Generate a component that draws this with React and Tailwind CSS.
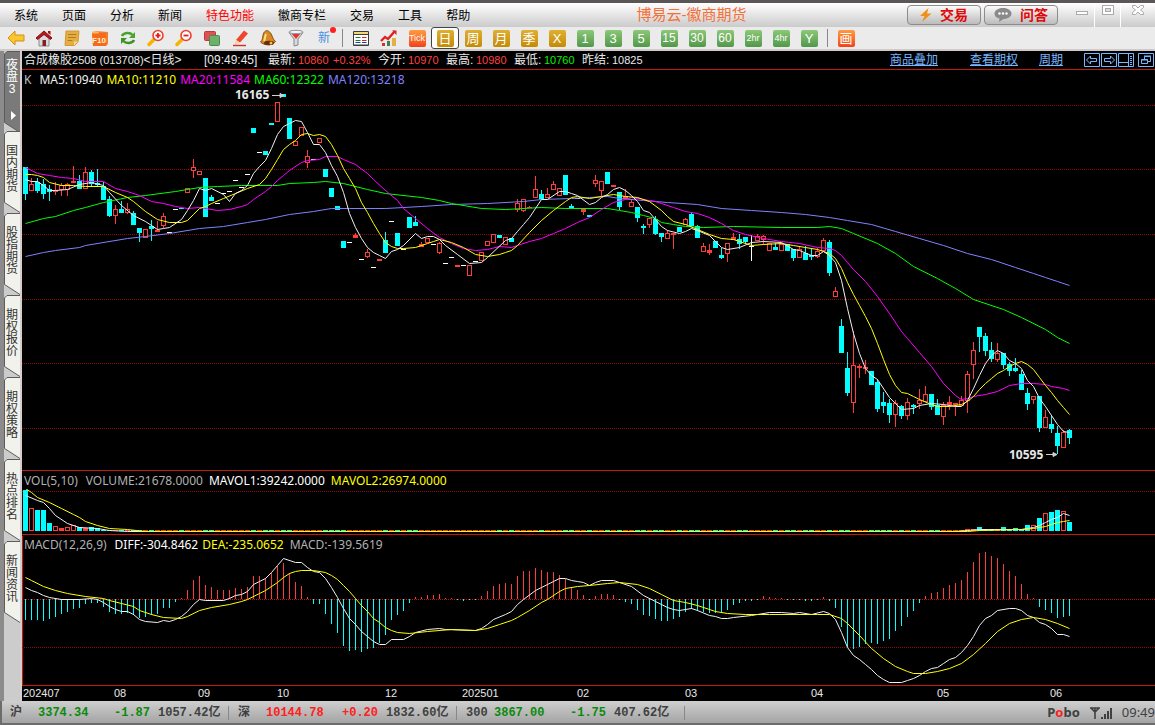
import { clsx } from 'clsx';

// one slot per trading day, everything is drawn in chart pixels
const STEP = 6;
const LEFT = 3;
const ZERO = 599;
const VOL_BASE = 531;

const RED = '#ff3c3c';
const CYAN = '#00ffff';
const WHITE = '#f0f0f0';
const YELLOW = '#ffff00';

// kind high top bottom low  (d = down, u = up, f = flat)
const CANDLES = `d 167 167 194 200,u 178 184 191 191,d 178 182 191 193,d 179 184 194 199,d 185 189 192 201,
u 182 190 192 195,u 183 185 190 196,u 183 184 190 196,u 166 181 183 183,d 175 181 189 189,
u 167 172 189 189,d 170 172 184 187,d 169 183 185 187,d 182 186 200 200,d 196 199 216 217,
u 205 209 216 224,d 201 209 213 213,u 203 209 213 214,d 211 213 225 225,d 228 228 233 242,
u 229 229 238 238,d 220 226 229 241,u 221 230 232 232,u 213 216 226 228,f 232 232 233 233,
f 209 209 210 210,d 208 208 209 209,u 188 188 193 193,u 159 167 171 178,u 171 171 175 175,
d 178 178 217 217,d 195 197 201 201,f 203 203 204 204,f 193 193 194 194,f 191 191 192 192,
f 180 180 181 181,f 187 187 188 188,f 174 174 175 175,d 128 128 133 133,f 152 152 153 153,
d 151 151 155 155,d 123 123 125 125,u 102 102 122 122,d 94 94 97 97,d 118 118 139 139,
u 141 141 146 146,u 127 127 136 136,u 150 156 163 168,f 159 159 160 160,u 138 138 143 143,
d 169 169 177 177,d 188 188 197 197,d 206 206 210 210,d 241 241 248 248,f 242 242 243 243,
u 233 235 238 238,f 259 259 260 260,u 249 252 257 258,f 267 267 268 268,u 259 259 261 261,
d 232 240 253 253,f 221 221 222 222,d 233 233 246 246,f 249 249 250 250,d 217 217 228 228,
d 216 222 226 226,u 242 244 247 247,u 238 238 243 243,f 244 244 245 245,u 242 243 253 254,
f 263 263 264 264,f 257 257 258 258,u 265 265 267 267,f 265 265 266 266,u 265 265 276 276,
f 261 261 262 262,u 252 252 261 261,u 241 241 246 246,u 234 234 243 243,d 235 235 238 238,
u 237 237 245 245,d 238 238 242 242,u 199 203 210 212,u 199 199 211 212,u 206 207 208 208,
u 176 189 198 198,d 190 194 199 199,u 188 194 198 198,u 181 184 190 190,u 188 188 196 196,
d 175 175 195 195,d 204 206 208 208,f 198 198 199 199,u 209 209 212 215,d 215 215 217 217,
u 175 180 184 187,u 181 181 191 196,d 172 172 184 184,u 185 185 187 187,d 192 192 207 210,
u 189 196 199 199,u 199 202 207 207,d 207 207 218 222,d 224 226 228 234,u 218 218 225 228,
d 216 219 234 235,d 233 233 237 242,u 230 233 239 239,u 233 233 235 249,d 227 227 232 232,
u 218 219 225 225,d 213 214 226 226,d 225 226 238 238,u 243 246 252 252,u 244 250 253 255,
d 241 241 248 248,d 248 255 258 259,u 243 243 254 262,u 233 237 240 240,d 234 239 244 249,
d 237 237 242 243,f 235 246 247 261,u 234 236 241 241,u 235 236 240 245,u 243 243 251 251,
d 243 247 250 250,u 243 244 251 251,d 244 244 251 251,d 249 249 258 261,u 246 249 258 258,
d 246 253 260 260,d 249 255 257 260,u 248 251 257 258,u 238 240 251 251,d 240 242 273 276,
u 287 291 297 297,d 319 326 353 353,d 352 368 393 396,u 331 365 403 413,u 364 366 368 378,
u 360 367 369 374,d 371 371 385 385,d 379 382 409 412,d 392 402 406 413,d 399 403 415 423,
u 400 403 415 427,d 405 406 416 419,u 398 402 416 420,d 404 405 407 414,u 389 400 404 409,
u 386 394 402 402,d 394 394 407 410,d 399 405 415 415,u 402 405 417 425,u 396 402 405 410,
u 403 403 405 416,u 396 400 406 406,u 371 374 401 413,u 342 350 365 379,d 327 327 337 352,
d 333 336 351 356,d 342 350 359 362,u 343 353 360 362,d 353 353 365 369,d 362 364 371 376,
d 358 368 371 372,d 370 374 390 390,d 388 393 404 410,u 396 396 400 404,d 396 396 428 432,
u 410 417 428 428,d 415 424 429 433,d 426 433 446 454,u 430 432 448 448,d 429 430 438 444`
  .split(',')
  .map((row) => {
    const [kind, ...nums] = row.trim().split(' ');
    const [high, top, bottom, low] = nums.map(Number);
    return { kind, high, top, bottom, low };
  });

// "slot,y" pairs
const MA_LINES = [
  {
    color: '#8080ff',
    data: '0,256 3,252 5,250 9,247 10,245 17,238 20,236 24,233 29,228 33,226 37,222 40,219 44,214 48,211 51,208 54,208 60,208 66,206 71,204 77,203 83,201 86,199 91,198 94,197 97,196 99,198 103,200 107,202 112,204 116,208 121,210 126,212 130,214 134,217 137,220 141,224 145,231 149,238 153,245 157,253 161,259 165,267 168,273 170,277 172,281 174,285',
  },
  {
    color: '#00ff00',
    data: '0,223 3,218 5,216 8,210 10,207 13,202 17,197 20,195 25,191 29,187 32,186 36,185 42,185 44,183 48,182 50,181 53,183 57,189 60,193 66,197 69,200 71,203 76,208 80,209 86,207 90,208 97,208 99,210 101,212 103,215 105,218 106,222 108,224 110,226 113,227 118,226 126,227 132,227 134,226 136,228 138,233 142,243 145,253 148,266 152,278 155,288 158,299 163,309 166,317 170,329 172,337 174,343',
  },
  {
    color: '#ff00ff',
    data: '0,167 2,173 4,175 6,177 8,178 10,181 13,181 15,188 17,191 19,195 21,201 23,203 25,206 27,208 29,207 32,210 34,209 36,206 37,204 38,199 40,191 41,186 42,180 43,175 44,170 46,162 47,160 49,159 50,156 52,156 53,159 55,164 57,173 58,179 60,190 62,200 63,208 65,218 67,228 69,237 71,243 73,248 75,250 77,249 79,246 81,247 82,245 84,241 86,238 88,233 90,228 92,222 94,217 96,209 98,202 100,199 101,197 103,199 105,201 106,203 108,207 110,211 112,213 114,217 116,223 118,230 120,234 123,238 126,241 129,243 132,247 134,248 135,250 136,255 137,262 138,269 140,281 142,296 144,313 146,331 147,338 149,352 151,366 153,383 155,395 156,399 157,398 158,396 160,394 162,391 164,385 166,383 168,383 170,384 171,386 173,388 174,390',
  },
  {
    color: YELLOW,
    data: '0,174 1,174 2,175 3,177 4,182 6,185 8,185 10,186 13,186 15,192 17,197 18,201 20,211 22,219 24,222 26,222 27,220 28,214 29,208 30,206 31,203 33,198 35,193 37,188 39,184 40,178 41,169 42,159 43,149 44,144 45,140 46,134 47,133 48,135 49,134 50,136 51,144 52,155 53,168 54,178 55,188 56,202 57,212 58,223 59,233 60,242 61,246 62,248 63,248 65,247 67,243 68,241 69,239 71,242 73,247 75,254 77,256 79,254 80,252 81,250 82,245 84,232 86,220 88,210 90,201 91,197 92,196 94,198 96,196 98,194 100,196 102,197 104,201 106,210 107,216 108,221 110,224 112,229 114,234 116,238 118,239 121,245 123,244 126,243 128,245 130,247 132,249 134,253 135,258 136,268 137,282 138,294 139,305 140,316 141,328 142,343 143,359 144,374 145,385 146,392 147,393 148,396 149,399 151,404 152,406 154,406 156,404 157,401 158,396 159,389 160,383 161,378 162,373 163,370 164,366 165,363 166,361 167,364 168,369 169,377 170,385 171,392 172,400 173,407 174,414',
  },
  {
    color: WHITE,
    data: '0,179 1,181 2,181 3,185 4,190 5,190 7,189 9,184 11,182 13,185 14,192 16,205 18,215 20,221 22,229 23,228 24,227 26,219 27,210 28,200 29,188 30,190 31,188 33,194 34,201 35,193 36,190 37,185 38,173 39,166 40,160 41,148 42,134 43,126 44,123 45,120 46,121 47,132 48,144 49,144 50,152 51,165 52,176 53,192 54,213 55,227 56,238 57,247 58,252 59,255 60,258 61,251 62,249 63,245 65,233 66,238 67,236 68,236 69,239 70,245 72,254 74,263 76,262 77,257 80,240 81,238 82,231 83,224 84,217 85,208 86,199 87,199 89,191 90,191 91,193 92,195 94,204 95,202 96,197 97,194 98,189 99,187 100,190 101,195 102,201 103,210 104,212 105,219 106,226 107,230 109,233 110,231 111,228 112,230 114,235 116,247 117,249 119,247 121,242 123,241 126,242 128,249 129,250 131,255 132,255 133,251 134,255 135,262 136,280 137,308 138,333 139,353 140,368 141,375 142,379 144,397 145,403 146,409 148,408 149,405 151,403 153,404 155,406 156,406 157,400 158,388 159,375 160,363 161,355 162,350 163,353 164,360 165,363 166,368 167,380 168,386 169,398 170,406 171,415 172,424 173,431 174,432',
  },
];

const VOL_TOPS = {
  0: 490, 1: 508, 2: 510, 3: 510, 4: 523, 5: 526, 6: 528, 7: 527, 8: 525, 9: 527, 10: 528, 11: 527, 12: 528,
  157: 529, 158: 529, 159: 527, 160: 529, 161: 529, 162: 529, 163: 527, 164: 529, 165: 528, 166: 529, 167: 525,
  168: 525, 169: 518, 170: 513, 171: 512, 172: 510, 173: 511, 174: 522,
};

const VOL_LINES = [
  {
    color: WHITE,
    data: '0,495 2,500 3,502 4,508 5,515 7,523 9,527 12,528 14,530 17,531 155,531 157,530 159,529 166,529 167,528 168,527 169,525 170,522 171,519 172,517 173,513 174,515',
  },
  {
    color: YELLOW,
    data: '0,488 1,492 2,497 4,502 6,508 8,514 9,517 10,521 12,525 14,528 17,529 20,531 157,531 159,530 166,529 168,528 170,526 171,524 172,522 173,521 174,520',
  },
];

const MACD_BARS = [
  620, 620, 620, 621, 619, 617, 614, 612, 609, 608, 604, 603, 603, 607, 612, 614, 614, 613, 615, 618, 617, 615, 614,
  608, 608, 602, 598, 590, 580, 576, 585, 587, 590, 590, 590, 588, 589, 587, 576, 576, 578, 573, 566, 563, 573, 582,
  586, 597, 604, 604, 614, 624, 633, 646, 651, 650, 652, 649, 648, 643, 635, 620, 615, 611, 603, 597, 597, 595, 595,
  594, 598, 598, 600, 601, 600, 600, 596, 591, 586, 584, 583, 584, 576, 571, 571, 568, 570, 572, 572, 575, 579, 588,
  590, 595, 600, 596, 594, 594, 595, 600, 602, 604, 610, 615, 616, 619, 621, 621, 619, 617, 612, 609, 611, 612, 613,
  613, 613, 610, 605, 603, 601, 601, 600, 596, 597, 598, 598, 600, 600, 600, 601, 601, 600, 597, 601, 608, 627, 647,
  649, 647, 644, 643, 644, 641, 639, 631, 626, 617, 611, 603, 596, 593, 592, 588, 585, 583, 580, 572, 562, 553, 552,
  556, 558, 564, 571, 576, 584, 594, 598, 607, 610, 613, 618, 617, 616,
];

const MACD_LINES = [
  {
    color: WHITE,
    data: '0,587 1,590 2,592 3,595 4,597 6,599 9,599 11,598 12,599 13,602 14,606 15,609 16,611 17,611 18,614 19,619 20,621 22,622 23,620 24,621 25,619 26,616 27,611 28,604 29,599 30,600 33,600 34,598 35,595 36,594 37,591 38,584 39,581 40,578 41,572 42,565 43,558 45,562 46,562 47,567 48,571 49,572 50,578 51,587 52,597 53,608 54,618 55,624 56,631 57,636 58,641 59,644 60,644 61,639 63,639 64,636 65,632 67,629 69,628 70,629 75,630 76,628 77,624 78,619 80,614 81,611 82,604 83,599 85,590 86,587 87,584 88,581 89,578 90,578 91,580 92,581 93,582 94,585 95,582 96,580 98,580 99,582 101,586 103,595 105,601 106,604 107,607 108,609 109,610 111,608 112,610 114,615 115,616 116,618 117,618 118,617 121,615 122,614 124,612 126,612 128,613 129,612 131,614 133,611 134,613 135,619 136,632 137,647 138,655 139,659 140,664 141,669 142,675 143,679 144,682 146,682 147,680 148,678 149,675 150,671 151,668 152,667 153,663 154,659 155,657 156,652 157,645 158,636 159,625 160,618 161,615 162,610 164,608 165,608 166,610 167,615 168,617 169,622 170,624 171,628 172,634 173,634 174,636',
  },
  {
    color: YELLOW,
    data: '0,577 1,580 3,586 5,590 7,593 10,596 13,598 14,600 16,603 18,606 19,610 21,614 23,617 26,618 27,616 29,610 31,607 34,604 36,601 37,599 39,593 40,590 41,586 42,582 43,577 44,573 45,571 46,570 48,570 50,572 51,575 52,579 53,585 54,591 55,598 56,605 57,611 58,618 59,622 60,627 61,630 62,632 64,633 67,631 71,629 75,630 77,628 79,624 81,620 82,617 84,610 86,602 87,599 89,591 90,588 92,586 94,585 97,583 99,582 102,584 104,588 106,594 108,600 110,602 112,605 115,611 117,613 120,614 124,614 132,614 134,614 136,618 137,623 139,635 141,648 143,658 145,666 147,671 148,673 150,673 152,671 154,668 156,663 158,654 160,643 162,631 164,623 166,619 168,617 170,619 172,623 174,628',
  },
];

const MONTHS = [
  ['202407', 1], ['08', 92], ['09', 176], ['10', 255], ['12', 363], ['202501', 440],
  ['02', 555], ['03', 663], ['04', 789], ['05', 915], ['06', 1028],
];

const MENU = ['系统', '页面', '分析', '新闻', '特色功能', '徽商专栏', '交易', '工具', '帮助'];
const PERIODS = ['日', '周', '月', '季', 'X'];
const MINUTES = ['1', '3', '5', '15', '30', '60', '2hr', '4hr', 'Y'];
const TABS = ['国内期货', '股指期货', '期权报价', '期权策略', '热点排名', '新闻资讯'];

const QUOTES = [
  { label: '今开', value: '10970', tone: 'text-[#ff4040]' },
  { label: '最高', value: '10980', tone: 'text-[#ff4040]' },
  { label: '最低', value: '10760', tone: 'text-[#00f000]' },
  { label: '昨结', value: '10825', tone: 'text-[#e8e8e8]' },
];

const INDICES = [
  { name: '沪', value: '3374.34', diff: '-1.87', amount: '1057.42亿', tone: 'text-[#0a8a0a]' },
  { name: '深', value: '10144.78', diff: '+0.20', amount: '1832.60亿', tone: 'text-[#ff2020]' },
  { name: '300', value: '3867.00', diff: '-1.75', amount: '407.62亿', tone: 'text-[#0a8a0a]' },
];

const toPoints = (data) =>
  data
    .split(' ')
    .map((pair) => {
      const [slot, y] = pair.split(',').map(Number);
      return `${slot * STEP + LEFT + 0.5},${y + 0.5}`;
    })
    .join(' ');

function Lines({ lines }) {
  return lines.map((line, i) => (
    <polyline key={i} points={toPoints(line.data)} fill="none" stroke={line.color} strokeWidth="1" />
  ));
}

function GridLine({ y, color = '#8c0c0c' }) {
  return <line x1="0" x2="100%" y1={y + 0.5} y2={y + 0.5} stroke={color} strokeDasharray="1 1" shapeRendering="crispEdges" />;
}

function Bar({ kind, x, top, bottom }) {
  const height = Math.max(bottom - top, 1);
  if (kind === 'u' && height > 3) {
    return <rect x={x - 1.5} y={top + 0.5} width="4" height={height - 1} fill="#000" stroke={RED} />;
  }
  const fill = kind === 'u' ? RED : kind === 'd' ? CYAN : '#ffffff';
  return <rect x={x - 2} y={top} width="5" height={height} fill={fill} />;
}

function PriceChart() {
  return (
    <svg className="block w-full flex-1 min-h-0 overflow-visible" role="img" aria-label="K线图">
      <g transform="translate(0 -90)">
        {[105, 169, 234, 299, 363, 428].map((y) => (
          <GridLine key={y} y={y} />
        ))}
        <g shapeRendering="crispEdges">
          {CANDLES.map((c, i) => {
            const x = i * STEP + LEFT;
            const color = c.kind === 'u' ? RED : c.kind === 'd' ? CYAN : '#ffffff';
            return (
              <g key={i}>
                <rect x={x} y={c.high} width="1" height={c.low - c.high} fill={color} />
                <Bar kind={c.kind} x={x} top={c.top} bottom={c.bottom} />
              </g>
            );
          })}
        </g>
        <Lines lines={MA_LINES} />
        <g className="font-['Noto_Sans','Open_Sans',sans-serif] text-[12px] font-bold" fill="#e8e8e8">
          <text x="213" y="99">16165</text>
          <text x="987" y="459">10595</text>
        </g>
        <g stroke="#d0d0d0" fill="#d0d0d0">
          <path d="M250 95.500h10M258 93.500l4 2-4 2z" />
          <path d="M1024 454.500h8M1031 452.500l4 2-4 2z" />
        </g>
      </g>
    </svg>
  );
}

function VolumeChart() {
  return (
    <svg className="block h-[45px] w-full" role="img" aria-label="成交量">
      <g transform="translate(0 -489)">
        <GridLine y={491} />
        <g shapeRendering="crispEdges">
          {CANDLES.map((c, i) => (
            <Bar
              key={i}
              kind={c.kind === 'f' ? 'u' : c.kind}
              x={i * STEP + LEFT}
              top={VOL_TOPS[i] || 530}
              bottom={VOL_BASE}
            />
          ))}
        </g>
        <Lines lines={VOL_LINES} />
      </g>
    </svg>
  );
}

function MacdChart() {
  return (
    <svg className="block h-[130px] w-full overflow-visible" role="img" aria-label="MACD">
      <g transform="translate(0 -555)">
        <rect x="0" y="536" width="1" height="149" fill="#c41808" />
        <GridLine y={ZERO} color="#c01010" />
        <GridLine y={647} />
        <g shapeRendering="crispEdges">
          {MACD_BARS.map((y, i) => (
            <rect
              key={i}
              x={i * STEP + LEFT}
              y={Math.min(y, ZERO)}
              width="1"
              height={Math.abs(y - ZERO)}
              fill={y < ZERO ? RED : CYAN}
            />
          ))}
        </g>
        <Lines lines={MACD_LINES} />
      </g>
    </svg>
  );
}

function Legend({ items, className }) {
  return (
    <div className={clsx("flex items-center gap-1 px-0.5 font-['Noto_Sans','Open_Sans',sans-serif] text-[12px] leading-[18px] whitespace-nowrap", className)}>
      {items.map(([text, tone]) => (
        <span key={text} className={tone}>{text}</span>
      ))}
    </div>
  );
}

function Tile({ label, tone, active }) {
  return (
    <button
      type="button"
      className={clsx(
        'flex h-[22px] w-7 shrink-0 items-center justify-center',
        active && 'rounded-[3px] border border-[#444] bg-white'
      )}
    >
      <span
        className={clsx(
          'flex size-[17px] items-center justify-center rounded-[2px] leading-none text-white',
          label.length > 2 ? 'text-[9px]' : label.length > 1 ? 'text-[12px]' : 'text-[13px]',
          tone
        )}
      >
        {label}
      </span>
    </button>
  );
}

function IconButton({ label, children }) {
  return (
    <button type="button" aria-label={label} className="flex h-[22px] w-7 shrink-0 items-center justify-center">
      <svg width="18" height="18" viewBox="0 0 18 18">{children}</svg>
    </button>
  );
}

function Magnifier({ plus }) {
  return (
    <>
      <path d="M2 15.500l5-5" stroke="#f5b400" strokeWidth="3.500" strokeLinecap="round" />
      <circle cx="11" cy="6.500" r="5" fill="#fff" stroke="#e8402c" strokeWidth="1.600" />
      <path d={plus ? 'M8.500 6.500h5M11 4v5' : 'M8.500 6.500h5'} stroke="#e0201c" strokeWidth="1.800" />
    </>
  );
}

function Toolbar() {
  const gold = 'bg-linear-to-b from-[#e0b030] to-[#c48a00]';
  const green = 'bg-linear-to-b from-[#8cc878] to-[#52984a]';
  const orange = 'bg-linear-to-b from-[#ff9a40] to-[#f04018]';
  return (
    <div className="flex h-[24px] items-center border-b-2 border-[#d2caca] bg-[#ebebeb] pl-0.5">
      <IconButton label="后退">
        <path d="M1 9l7-7v4h9v6H8v4z" fill="#fbc62c" stroke="#d09018" />
      </IconButton>
      <IconButton label="首页">
        <path d="M4 9v8h10V9L9 5z" fill="#d8dade" stroke="#8a8c92" />
        <path d="M1 9l8-7 8 7-1.500 1.500L9 5.500l-6.500 5z" fill="#b8181c" stroke="#8c1014" />
        <path d="M13 2h2.500v4L13 4z" fill="#a01418" />
        <path d="M7.500 11h3.500v6H7.500z" fill="#8c1c1c" />
      </IconButton>
      <IconButton label="资讯">
        <path d="M3 2h13l-1 11-3.500 3.500H2z" fill="#e4ae44" stroke="#d09a34" />
        <path d="M5 5.500h8.500M5 8.500h8M4.500 11.500h5" stroke="#b07c20" />
        <path d="M15 12.500l-4 4v-4z" fill="#f8d888" />
      </IconButton>
      <IconButton label="F10">
        <path d="M1 4l4-2 12 1v12l-2 2H2z" fill="#f08030" />
        <path d="M1 4h14v13H2z" fill="#f46a20" />
        <path d="M1 2.500h6l1 2H1z" fill="#fcb850" />
        <text x="8" y="14" textAnchor="middle" fill="#fff4c0" fontSize="8" fontWeight="bold" fontFamily="Liberation Sans">F10</text>
      </IconButton>
      <IconButton label="刷新">
        <path d="M3 7c1.500-3.500 8-4 10.500-1" fill="none" stroke="#48a42c" strokeWidth="2.600" />
        <path d="M16 3v6h-6z" fill="#48a42c" />
        <path d="M15 11c-1.500 3.500-8 4-10.500 1" fill="none" stroke="#3c9424" strokeWidth="2.600" />
        <path d="M2 15V9h6z" fill="#3c9424" />
      </IconButton>
      <IconButton label="放大"><Magnifier plus /></IconButton>
      <IconButton label="缩小"><Magnifier /></IconButton>
      <IconButton label="叠加">
        <rect x="1.500" y="2.500" width="11" height="9" rx="1" fill="#e05050" stroke="#b83c3c" />
        <rect x="6.500" y="6.500" width="10" height="10" rx="1" fill="#6cb06c" stroke="#488c50" />
      </IconButton>
      <IconButton label="画线">
        <path d="M5 11l8-9.500 4 3L9 13.500z" fill="#f0442c" />
        <path d="M5 11l4 2.500-5.500 2.500z" fill="#f8d0a0" />
        <path d="M2 16.500h13" stroke="#d03020" strokeWidth="1.400" />
      </IconButton>
      <IconButton label="预警">
        <path d="M1.500 13c3-2 1.500-6 3.500-9.500C7 .5 9.500 1.500 11.500 4c2 2.500 1.500 5.500 5 8.500-3 4-11 4.500-15 .5z" fill="#d88a20" stroke="#8c4c0c" />
        <path d="M7 5c-1 2-1 5-2 7" stroke="#fce08c" strokeWidth="2" fill="none" />
        <ellipse cx="10" cy="14" rx="5" ry="2.200" fill="#6c2c0c" />
        <circle cx="12" cy="14" r="1.500" fill="#f8c040" />
      </IconButton>
      <IconButton label="筛选">
        <path d="M2 3.500h14L11 10v6l-4 1v-7z" fill="#d8dce0" stroke="#84888c" />
        <path d="M4.500 4.500h9L9 10z" fill="#e83030" />
        <ellipse cx="9" cy="3" rx="7" ry="1.700" fill="#f4f4f4" stroke="#8c9094" />
      </IconButton>
      <button type="button" className="relative flex h-[22px] w-7 items-center justify-center text-[12px] text-[#4a90e0]">
        新
        <span className="absolute top-0 right-0.5 size-1.5 rounded-full bg-[#ff2020]" />
      </button>
      <span className="mx-1 h-[18px] w-px bg-[#888]" />
      <IconButton label="报价">
        <path d="M1.500 2.500h15v14h-15z" fill="#fff" stroke="#3c3c3c" />
        <path d="M2 3h14v2.500H2z" fill="#f0d878" />
        <path d="M1.500 5.500h15M2 16h14" stroke="#3c3c3c" />
        <path d="M3.500 8.500h5M3.500 11.500h5" stroke="#207820" />
        <path d="M10 8.500h4.500M10 11.500h4.500" stroke="#e02020" />
        <path d="M3.500 13.500h5M10 13.500h4.500" stroke="#2040b0" />
      </IconButton>
      <IconButton label="走势">
        <path d="M2 17v-3h3v3z" fill="#d03030" />
        <path d="M7 17v-5h3v5z" fill="#38844c" />
        <path d="M12 17V9h4v8z" fill="#e4b040" />
        <path d="M1 12l4-4 3 2 7-8" fill="none" stroke="#e02020" strokeWidth="2.400" />
        <path d="M12 1.500h4.500V6z" fill="#e02020" />
      </IconButton>
      <Tile label="Tick" tone={orange} />
      {PERIODS.map((p, i) => (
        <Tile key={p} label={p} tone={gold} active={i === 0} />
      ))}
      {MINUTES.map((m) => (
        <Tile key={m} label={m} tone={green} />
      ))}
      <span className="mx-1 h-[18px] w-px bg-[#888]" />
      <Tile label="画" tone={orange} />
    </div>
  );
}

function TitleBar() {
  return (
    <div className="flex h-[27px] items-center border-t-[3px] border-[#5a5656] bg-linear-to-b from-white to-[#cbcbcb]">
      <nav className="flex gap-6 pt-0.5 pl-3.5">
        {MENU.map((item) => (
          <button key={item} type="button" className={clsx('whitespace-nowrap', item === '特色功能' ? 'text-[#ff0000]' : 'text-black')}>
            {item}
          </button>
        ))}
      </nav>
      <h1 className="flex-1 pl-1.5 text-center text-[15px] whitespace-nowrap text-[#f47038]">博易云-徽商期货</h1>
      <div className="flex gap-[3px]">
        <button type="button" className="flex h-5 w-[74px] items-center justify-center gap-2 rounded-[4px] border border-[#8c8c8c] bg-linear-to-b from-[#fafafa] to-[#bcbcbc] text-[14px] font-bold text-[#e00808]">
          <svg width="12" height="14" viewBox="0 0 12 14"><path d="M8.500 0L0 8h4.500L2 14l9.500-8.500H7z" fill="#f09018" /></svg>
          交易
        </button>
        <button type="button" className="flex h-5 w-[74px] items-center justify-center gap-2 rounded-[4px] border border-[#8c8c8c] bg-linear-to-b from-[#fafafa] to-[#bcbcbc] text-[14px] font-bold text-[#e00808]">
          <svg width="18" height="14" viewBox="0 0 18 14">
            <path d="M9 0c5 0 8.500 2.500 8.500 5.500S14 11 9.500 11L5 14l.500-3.500C2 9.800.500 8 .500 5.500.500 2.500 4 0 9 0z" fill="#8a8a8a" />
            <circle cx="5.500" cy="5.500" r="1.200" fill="#fff" />
            <circle cx="9" cy="5.500" r="1.200" fill="#fff" />
            <circle cx="12.500" cy="5.500" r="1.200" fill="#fff" />
          </svg>
          问答
        </button>
      </div>
      <div className="flex h-full pl-3">
        <button type="button" aria-label="最小化" className="flex w-[25px] justify-center border-r border-white pt-1">
          <svg width="14" height="10"><rect x="1.500" y="4.500" width="11" height="3" fill="#fff" stroke="#aaa" /></svg>
        </button>
        <button type="button" aria-label="最大化" className="flex w-[26px] justify-center border-r border-white pt-0.5">
          <svg width="14" height="10"><rect x="1.500" y=".5" width="11" height="9" fill="#fff" stroke="#aaa" /><rect x="4.500" y="3.500" width="5" height="3" fill="#ddd" stroke="#aaa" /></svg>
        </button>
        <button type="button" aria-label="关闭" className="flex w-[34px] justify-center pt-0.5">
          <svg width="14" height="10"><path d="M1.500.5h3L7 3 9.500.5h3v2L9.500 5l3 2.500v2h-3L7 7 4.500 9.500h-3v-2L4.500 5l-3-2.500z" fill="#fff" stroke="#aaa" /></svg>
        </button>
      </div>
    </div>
  );
}

function TabShape({ active }) {
  return (
    <svg className="absolute inset-0" width="16" height="82" viewBox="0 0 16 82" aria-hidden="true">
      <path d="M16 .500H3L.500 3v68.500L16 81.500" fill={active ? '#7a7a7a' : '#f2f2ec'} stroke="#5c5c5c" />
    </svg>
  );
}

function SideTabs() {
  return (
    <aside className="w-[22px] shrink-0 border-r-2 border-l-4 border-r-[#d8cccc] border-l-[#8c8a8a] bg-[#cccccc]">
      <button type="button" className="relative flex h-[80px] w-4 justify-center pt-2 text-[12px] leading-[12px] text-white">
        <TabShape active />
        <span className="relative w-3 break-all">夜盘3</span>
        <svg className="absolute top-[60px] left-1.5" width="6" height="9"><path d="M1 0l5 4.500L1 9z" fill="#fff" /></svg>
      </button>
      {TABS.map((tab) => (
        <button key={tab} type="button" className="relative flex h-[82px] w-4 justify-center pt-3.5 text-[12px] leading-[12px] text-[#333]">
          <TabShape />
          <span className="relative w-3">{tab}</span>
        </button>
      ))}
    </aside>
  );
}

function ChartHeader() {
  const frame = { fill: 'none', stroke: '#78b8ff' };
  return (
    <header className="flex h-[19px] items-center border-b border-[#c41808] pl-0.5 whitespace-nowrap">
      <div className="w-[180px]">
        合成橡胶<span className="text-[11px]">2508 (013708)</span>&lt;日线&gt;
      </div>
      <time className="w-[64px] text-[12px]">[09:49:45]</time>
      <div className="flex w-[110px] items-center">
        <span className="w-[30px]">最新:</span>
        <span className="w-[35px] text-[11px] text-[#ff4040]">10860</span>
        <span className="text-[11px] text-[#ff4040]">+0.32%</span>
      </div>
      {QUOTES.map((q) => (
        <div key={q.label} className="flex w-[68px] items-center">
          <span className="w-[30px]">{q.label}:</span>
          <span className={clsx('text-[11px]', q.tone)}>{q.value}</span>
        </div>
      ))}
      <div className="ml-auto flex items-center text-[#78b8ff]">
        <a href="#overlay" className="mr-8 underline">商品叠加</a>
        <a href="#option" className="mr-[21px] underline">查看期权</a>
        <a href="#period" className="mr-[21px] underline">周期</a>
        <button type="button" aria-label="左移">
          <svg className="block" width="17" height="14"><path d="M.5.5h15v13H.5zM2.500 7l4-4v2.500h6v3h-6V11z" {...frame} /></svg>
        </button>
        <button type="button" aria-label="右移">
          <svg className="block" width="17" height="14"><path d="M.5.5h15v13H.5zM13.500 7l-4-4v2.500h-6v3h6V11z" {...frame} /></svg>
        </button>
        <button type="button" aria-label="侧栏" className="mr-1">
          <svg className="block" width="16" height="14"><path d="M.5.5h15v13H.5zM10.500 1v12M1 9.500h9M12 3.500h2M12 5.500h2M12 7.500h2M12 9.500h2M12 11.500h2" {...frame} /></svg>
        </button>
        <button type="button" aria-label="还原" className="mr-px">
          <svg className="block" width="16" height="14"><path d="M.5.5h15v13H.5zM6.500 6V3.500h6v5H10M6 3h7M3.500 6.500h6v4h-6zM3 7h7" {...frame} /></svg>
        </button>
      </div>
    </header>
  );
}

function StatusBar() {
  return (
    <footer className="flex h-6 items-center border-b-2 border-l-2 border-[#6c6c6c] bg-linear-to-b from-[#cfcfcf] to-[#a4a4a4] pt-0.5 pl-2 font-['Liberation_Mono','Noto_Sans_CJK_SC',monospace] text-[12px] font-bold whitespace-nowrap text-[#404040]">
      {INDICES.map((q) => (
        <div key={q.name} className="mr-[9px] flex w-[219px] items-center border-r border-[#888] leading-[14px]">
          <span className="w-7">{q.name}</span>
          <span className={clsx('w-[64px]', q.tone)}>{q.value}</span>
          <span className={clsx('mr-2 flex-1 text-right', q.tone)}>{q.diff}</span>
          <span className="mr-2 w-[62px]">{q.amount}</span>
        </div>
      ))}
      <div className="ml-auto flex items-center gap-[10px] font-['Noto_Sans','Open_Sans',sans-serif]">
        <span className="text-[13px]">P<span className="text-[#ff2020]">o</span>bo</span>
        <svg width="22" height="13" viewBox="0 0 22 13" fill="none" stroke="#404040">
          <path d="M0 1h10M1 1l4 4 4-4M5 1v11" strokeWidth="1.600" />
          <path d="M12 12v-2M15 12V7M18 12V4M21 12V1" strokeWidth="2" />
        </svg>
        <time className="text-[13px] font-normal">09:49</time>
      </div>
    </footer>
  );
}

export default function App() {
  return (
    <div className="flex min-h-screen w-full flex-col overflow-hidden bg-[#cccccc] font-['Liberation_Sans','Noto_Sans_CJK_SC',sans-serif] text-[12px]">
      <TitleBar />
      <Toolbar />
      <div className="flex flex-1">
        <SideTabs />
        <main className="flex min-w-0 flex-1 flex-col bg-black text-[#e8e8e8]">
          <ChartHeader />
          <section className="flex flex-1 flex-col border-b border-[#c41808]">
            <Legend
              className="h-5"
              items={[
                ['K', 'text-[#c0c0c0] mr-1'],
                ['MA5:10940', 'text-[#f0f0f0]'],
                ['MA10:11210', 'text-[#ffff00]'],
                ['MA20:11584', 'text-[#ff00ff]'],
                ['MA60:12322', 'text-[#00ff00]'],
                ['MA120:13218', 'text-[#8080ff]'],
              ]}
            />
            <PriceChart />
          </section>
          <section className="border-b border-[#c41808]">
            <Legend
              className="h-[18px] pt-0.5"
              items={[
                ['VOL(5,10)', 'text-[#b0b0b0] mr-1'],
                ['VOLUME:21678.0000', 'text-[#b0b0b0] mr-0.5'],
                ['MAVOL1:39242.0000', 'text-white mr-0.5'],
                ['MAVOL2:26974.0000', 'text-[#ffff00]'],
              ]}
            />
            <VolumeChart />
          </section>
          <section className="border-b border-[#c41808]">
            <Legend
              className="h-5"
              items={[
                ['MACD(12,26,9)', 'text-[#b0b0b0] mr-1'],
                ['DIFF:-304.8462', 'text-white'],
                ['DEA:-235.0652', 'text-[#ffff00] mr-0.5'],
                ['MACD:-139.5619', 'text-[#b0b0b0]'],
              ]}
            />
            <MacdChart />
          </section>
          <svg className="block h-[15px] w-full text-[11px]" fill="#e8e8e8">
            {MONTHS.map(([label, x]) => (
              <text key={label} x={x} y="11">{label}</text>
            ))}
          </svg>
        </main>
      </div>
      <StatusBar />
    </div>
  );
}
